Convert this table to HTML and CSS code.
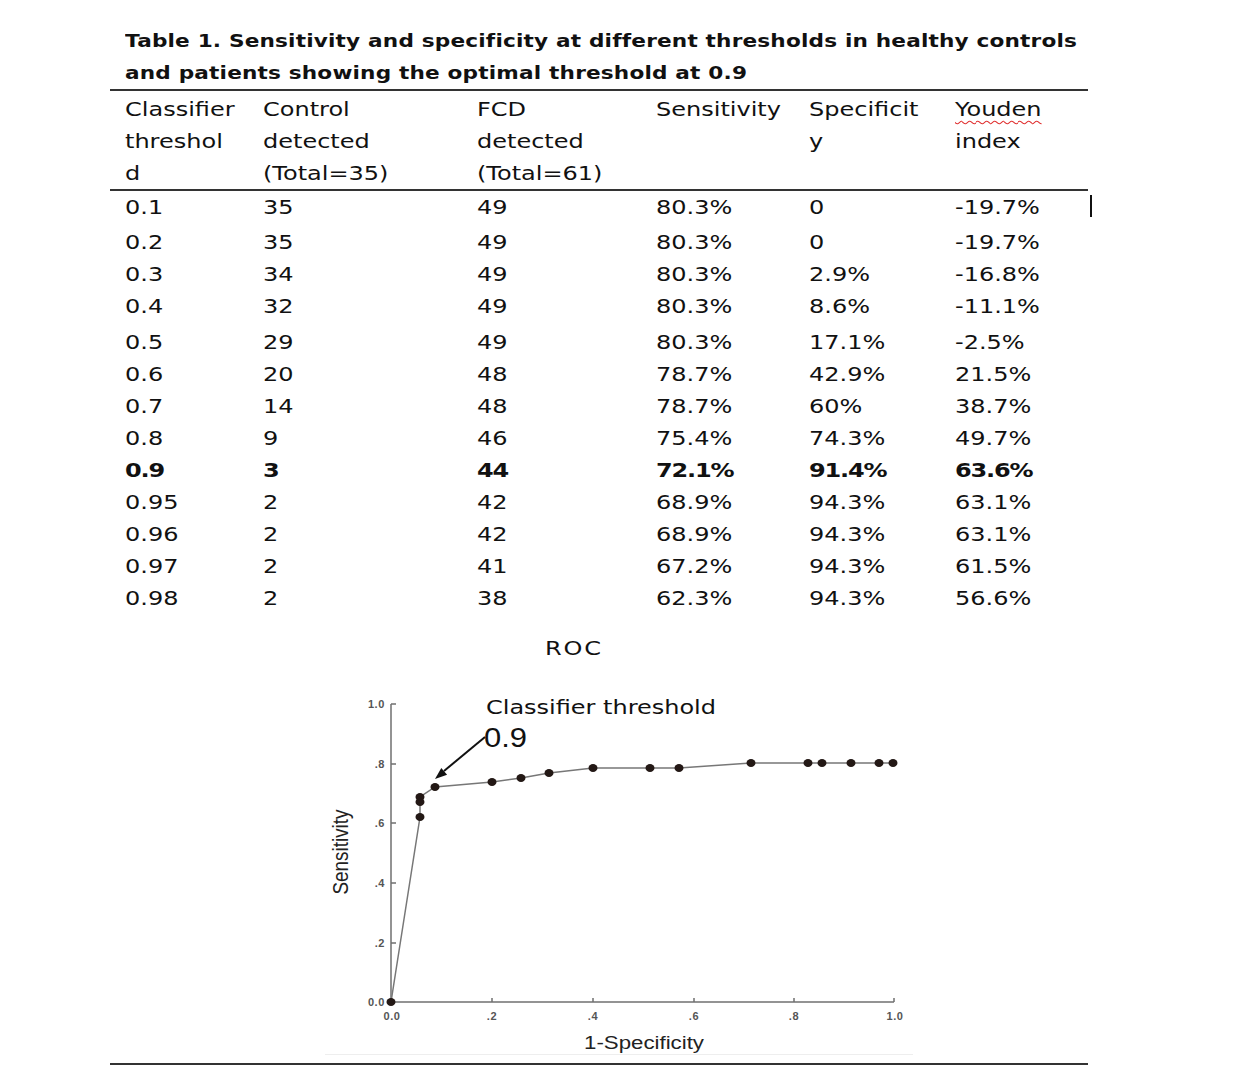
FILE: index.html
```html
<!DOCTYPE html>
<html>
<head>
<meta charset="utf-8">
<title>Table 1 and ROC</title>
<link rel="stylesheet" href="styles.css">
</head>
<body>
<div class="page">
  <div class="caption">Table 1. Sensitivity and specificity at different thresholds in healthy controls<br>and patients showing the optimal threshold at 0.9</div>
  <div class="table">
    <div class="row head">
      <div>Classifier<br>threshol<br>d</div>
      <div>Control<br>detected<br>(Total=35)</div>
      <div>FCD<br>detected<br>(Total=61)</div>
      <div>Sensitivity</div>
      <div>Specificit<br>y</div>
      <div><span class="spell">Youden</span><br>index</div>
    </div>
    <div class="row data gap3"><div>0.1</div><div>35</div><div>49</div><div>80.3%</div><div>0</div><div>-19.7%</div><span class="caret"></span></div>
    <div class="row data"><div>0.2</div><div>35</div><div>49</div><div>80.3%</div><div>0</div><div>-19.7%</div></div>
    <div class="row data"><div>0.3</div><div>34</div><div>49</div><div>80.3%</div><div>2.9%</div><div>-16.8%</div></div>
    <div class="row data gap4"><div>0.4</div><div>32</div><div>49</div><div>80.3%</div><div>8.6%</div><div>-11.1%</div></div>
    <div class="row data"><div>0.5</div><div>29</div><div>49</div><div>80.3%</div><div>17.1%</div><div>-2.5%</div></div>
    <div class="row data"><div>0.6</div><div>20</div><div>48</div><div>78.7%</div><div>42.9%</div><div>21.5%</div></div>
    <div class="row data"><div>0.7</div><div>14</div><div>48</div><div>78.7%</div><div>60%</div><div>38.7%</div></div>
    <div class="row data"><div>0.8</div><div>9</div><div>46</div><div>75.4%</div><div>74.3%</div><div>49.7%</div></div>
    <div class="row data best"><div>0.9</div><div>3</div><div>44</div><div>72.1%</div><div>91.4%</div><div>63.6%</div></div>
    <div class="row data"><div>0.95</div><div>2</div><div>42</div><div>68.9%</div><div>94.3%</div><div>63.1%</div></div>
    <div class="row data"><div>0.96</div><div>2</div><div>42</div><div>68.9%</div><div>94.3%</div><div>63.1%</div></div>
    <div class="row data"><div>0.97</div><div>2</div><div>41</div><div>67.2%</div><div>94.3%</div><div>61.5%</div></div>
    <div class="row data"><div>0.98</div><div>2</div><div>38</div><div>62.3%</div><div>94.3%</div><div>56.6%</div></div>
  </div>
  <div class="roc"><span class="roc-text">ROC</span></div>
  <div class="figure">
    <svg class="chart" width="588" height="364" viewBox="325 690 588 364" xmlns="http://www.w3.org/2000/svg">
      <g class="axis">
        <path d="M391 704 V1002 H894"/>
        <path d="M391 704 H396 M391 764 H396 M391 823 H396 M391 883 H396 M391 943 H396"/>
        <path d="M492 1002 V998 M593 1002 V998 M694 1002 V998 M794 1002 V998 M894 1002 V998"/>
      </g>
      <g class="ticklabel" text-anchor="end">
        <text x="385" y="708">1.0</text>
        <text x="385" y="768">.8</text>
        <text x="385" y="827">.6</text>
        <text x="385" y="887">.4</text>
        <text x="385" y="947">.2</text>
        <text x="385" y="1006">0.0</text>
      </g>
      <g class="ticklabel" text-anchor="middle">
        <text x="392" y="1020">0.0</text>
        <text x="492" y="1020">.2</text>
        <text x="593" y="1020">.4</text>
        <text x="694" y="1020">.6</text>
        <text x="794" y="1020">.8</text>
        <text x="895" y="1020">1.0</text>
      </g>
      <text class="axislabel" transform="translate(348 852) scale(1.2 1) rotate(-90)" text-anchor="middle" textLength="85" lengthAdjust="spacingAndGlyphs">Sensitivity</text>
      <text class="axislabel" x="584" y="1049" textLength="120" lengthAdjust="spacingAndGlyphs">1-Specificity</text>
      <polyline class="curve" points="391,1002 420,817 420,797 435,787 492,782 521,778 549,773 593,768 650,768 679,768 751,763 808,763 894,763"/>
      <g class="dots">
        <ellipse cx="391" cy="1002" rx="4.5" ry="4"/>
        <ellipse cx="420" cy="817" rx="4.5" ry="4"/>
        <ellipse cx="420" cy="802" rx="4.5" ry="4"/>
        <ellipse cx="420" cy="797" rx="4.5" ry="4"/>
        <ellipse cx="435" cy="787" rx="4.5" ry="4"/>
        <ellipse cx="492" cy="782" rx="4.5" ry="4"/>
        <ellipse cx="521" cy="778" rx="4.5" ry="4"/>
        <ellipse cx="549" cy="773" rx="4.5" ry="4"/>
        <ellipse cx="593" cy="768" rx="4.5" ry="4"/>
        <ellipse cx="650" cy="768" rx="4.5" ry="4"/>
        <ellipse cx="679" cy="768" rx="4.5" ry="4"/>
        <ellipse cx="751" cy="763" rx="4.5" ry="4"/>
        <ellipse cx="808" cy="763" rx="4.5" ry="4"/>
        <ellipse cx="822" cy="763" rx="4.5" ry="4"/>
        <ellipse cx="851" cy="763" rx="4.5" ry="4"/>
        <ellipse cx="879" cy="763" rx="4.5" ry="4"/>
        <ellipse cx="893" cy="763" rx="4.5" ry="4"/>
      </g>
      <text class="annot" x="486" y="714" textLength="230" lengthAdjust="spacingAndGlyphs">Classifier threshold</text>
      <text class="annotnum" x="484" y="747" textLength="43" lengthAdjust="spacingAndGlyphs">0.9</text>
      <path class="arrow" d="M485 737 L444 771"/>
      <polygon class="arrowhead" points="435,779 447.1,774.7 441.3,767.9"/>
    </svg>
  </div>
  <div class="rule"></div>
</div>
</body>
</html>
```

FILE: styles.css
```css
html, body {
  margin: 0;
  padding: 0;
  background: #ffffff;
}

body {
  color: #111111;
  font-family: "DejaVu Sans", "Liberation Sans", sans-serif;
}

.page {
  width: 978px;
  margin-left: 110px;
  padding-top: 25px;
}

/* The source figure is stretched horizontally (about 1.2x), so text is widened the same way */
.caption {
  padding-left: 15px;
  font-weight: bold;
  font-size: 18px;
  line-height: 32px;
  letter-spacing: 0.15px;
  white-space: nowrap;
  transform: scaleX(1.2);
  transform-origin: 15px 0;
}

.table {
  border-top: 2px solid #333333;
}

.row {
  position: relative;
  display: grid;
  grid-template-columns: 138px 214px 179px 153px 146px 1fr;
  padding-left: 15px;
  font-size: 20px;
  line-height: 32px;
  white-space: nowrap;
}

.row > div {
  transform: scaleX(1.2);
  transform-origin: 0 0;
}

.head {
  padding-top: 2px;
  border-bottom: 2px solid #333333;
}

.best {
  font-weight: bold;
  letter-spacing: -1px;
}

.gap3 {
  margin-bottom: 3px;
}

.gap4 {
  margin-bottom: 4px;
}

.spell {
  text-decoration: underline wavy #e03030;
  text-decoration-thickness: 1px;
  text-underline-offset: 4px;
}

.caret {
  position: absolute;
  left: 980px;
  top: 4px;
  width: 2px;
  height: 22px;
  background: #111111;
}

.roc {
  margin-top: 18px;
  padding-left: 435px;
  font-size: 20px;
  line-height: 32px;
}

.roc-text {
  display: inline-block;
  letter-spacing: 1.5px;
  transform: scaleX(1.2);
  transform-origin: 0 0;
}

.figure {
  margin-top: 26px;
  margin-left: 215px;
  width: 588px;
  height: 364px;
  border-bottom: 1px solid #eeeeee;
}

.chart {
  display: block;
}

.axis path {
  fill: none;
  stroke: #707070;
  stroke-width: 1.5;
}

.ticklabel text {
  font-family: "Liberation Sans", Arial, sans-serif;
  font-size: 11px;
  font-weight: bold;
  letter-spacing: 0.6px;
  fill: #555555;
}

.axislabel {
  font-family: "Liberation Sans", Arial, sans-serif;
  font-size: 18px;
  fill: #222222;
}

.curve {
  fill: none;
  stroke: #777777;
  stroke-width: 1.5;
}

.dots ellipse {
  fill: #231815;
}

.annot {
  font-family: "DejaVu Sans", sans-serif;
  font-size: 20px;
  fill: #111111;
}

.annotnum {
  font-family: "Liberation Sans", Arial, sans-serif;
  font-size: 28px;
  fill: #111111;
}

.arrow {
  fill: none;
  stroke: #111111;
  stroke-width: 2;
}

.arrowhead {
  fill: #111111;
}

.rule {
  margin-top: 8px;
  height: 2px;
  background: #333333;
}
```
